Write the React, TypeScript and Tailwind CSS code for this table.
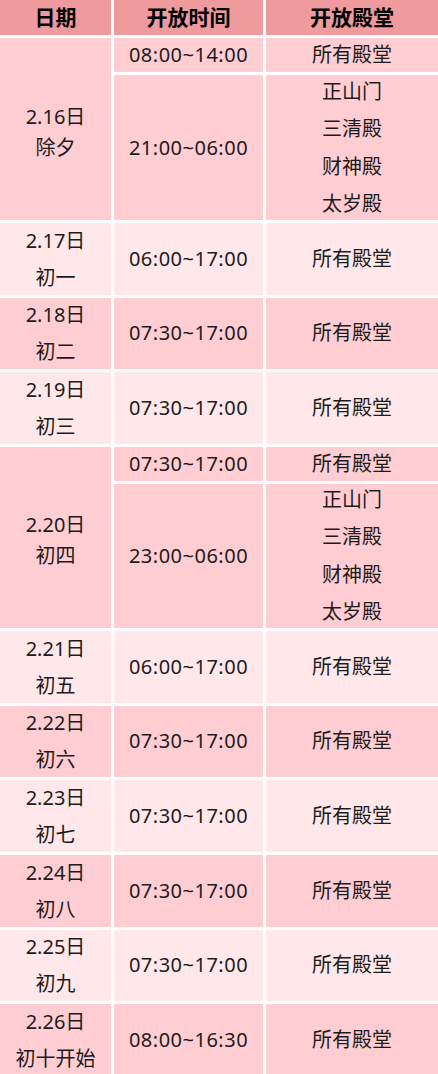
import React from "react";

const DARK = "bg-[#ffcdd2]";
const LIGHT = "bg-[#ffe7ea]";

type Row =
  | { kind: "single"; date: string; lunar: string; time: string; bg: string }
  | { kind: "block"; date: string; lunar: string; time1: string; time2: string; bg: string };

const rows: Row[] = [
  { kind: "block", date: "2.16日", lunar: "除夕", time1: "08:00~14:00", time2: "21:00~06:00", bg: DARK },
  { kind: "single", date: "2.17日", lunar: "初一", time: "06:00~17:00", bg: LIGHT },
  { kind: "single", date: "2.18日", lunar: "初二", time: "07:30~17:00", bg: DARK },
  { kind: "single", date: "2.19日", lunar: "初三", time: "07:30~17:00", bg: LIGHT },
  { kind: "block", date: "2.20日", lunar: "初四", time1: "07:30~17:00", time2: "23:00~06:00", bg: DARK },
  { kind: "single", date: "2.21日", lunar: "初五", time: "06:00~17:00", bg: LIGHT },
  { kind: "single", date: "2.22日", lunar: "初六", time: "07:30~17:00", bg: DARK },
  { kind: "single", date: "2.23日", lunar: "初七", time: "07:30~17:00", bg: LIGHT },
  { kind: "single", date: "2.24日", lunar: "初八", time: "07:30~17:00", bg: DARK },
  { kind: "single", date: "2.25日", lunar: "初九", time: "07:30~17:00", bg: LIGHT },
  { kind: "single", date: "2.26日", lunar: "初十开始", time: "08:00~16:30", bg: DARK },
];

const cell = "flex flex-col items-center justify-center text-center min-h-0 overflow-visible";

export default function App() {
  return (
    <div
      className="w-[438px] h-[1074px] overflow-hidden bg-white grid grid-cols-[111px_149px_172px] gap-[3px] grid-rows-[35px_34px_145px_71.67px_71.67px_71.67px_34px_144px_71.67px_71.67px_71.67px_71.67px_71.67px_71.67px] text-[20px] text-[#1c1c1c]"
      style={{ fontFamily: '"Noto Sans", "Noto Sans CJK SC", sans-serif' }}
    >
      <div className={`${cell} bg-[#ef9a9c] font-bold text-[21px] text-black`}>日期</div>
      <div className={`${cell} bg-[#ef9a9c] font-bold text-[21px] text-black`}>开放时间</div>
      <div className={`${cell} bg-[#ef9a9c] font-bold text-[21px] text-black`}>开放殿堂</div>
      {rows.map((r, i) =>
        r.kind === "block" ? (
          <React.Fragment key={i}>
            <div className={`${cell} ${r.bg} row-span-2 leading-[31px] pt-[6px]`}>
              <span>{r.date}</span>
              <span>{r.lunar}</span>
            </div>
            <div className={`${cell} ${r.bg} leading-[34px] tracking-[0.5px]`}>{r.time1}</div>
            <div className={`${cell} ${r.bg} leading-[34px]`}>所有殿堂</div>
            <div className={`${cell} ${r.bg} tracking-[0.5px]`}>{r.time2}</div>
            <div className={`${cell} ${r.bg} leading-[37.5px]`}>
              <span>正山门</span>
              <span>三清殿</span>
              <span>财神殿</span>
              <span>太岁殿</span>
            </div>
          </React.Fragment>
        ) : (
          <React.Fragment key={i}>
            <div className={`${cell} ${r.bg} leading-[37px]`}>
              <span>{r.date}</span>
              <span>{r.lunar}</span>
            </div>
            <div className={`${cell} ${r.bg} tracking-[0.5px]`}>{r.time}</div>
            <div className={`${cell} ${r.bg}`}>所有殿堂</div>
          </React.Fragment>
        )
      )}
    </div>
  );
}
